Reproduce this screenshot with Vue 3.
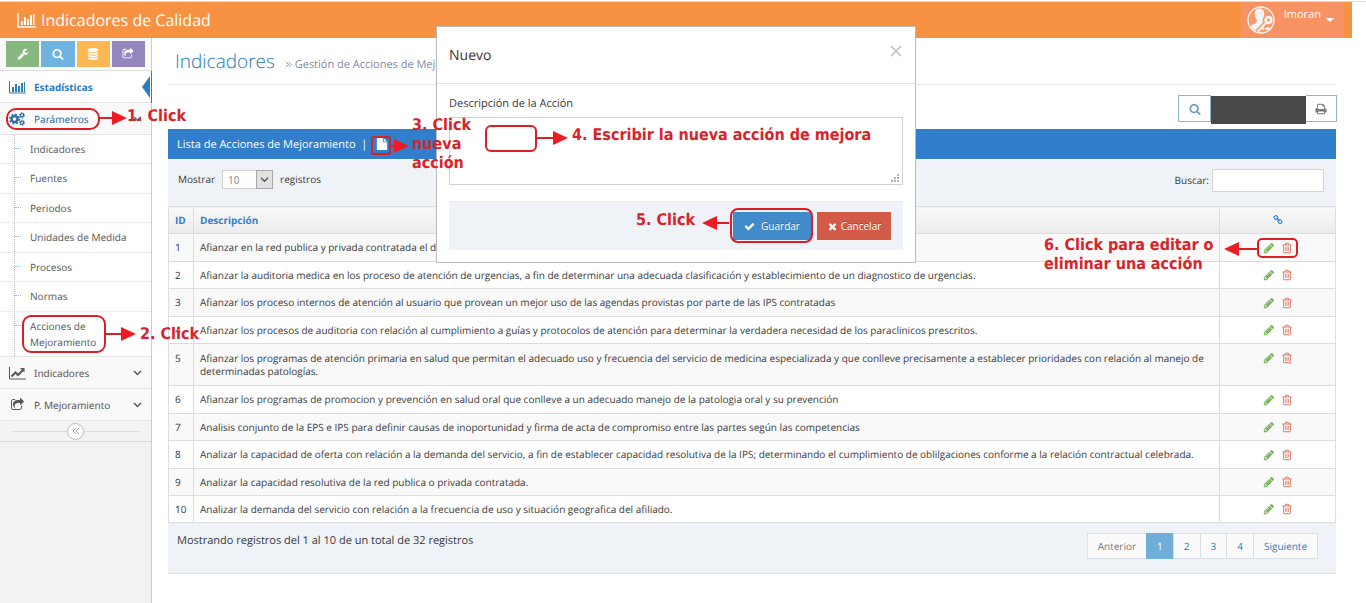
<script setup>
import { ref } from 'vue'

const icons = {
  wrench: 'M448 1472q0-26-19-45t-45-19-45 19-19 45 19 45 45 19 45-19 19-45zm644-420l-682 682q-37 37-90 37-52 0-91-37l-106-108q-38-36-38-90 0-53 38-91l681-681q39 98 114.5 173.5t173.5 114.5zm634-435q0 39-23 106-47 134-164.5 217.5t-258.5 83.5q-185 0-316.5-131.5t-131.5-316.5 131.5-316.5 316.5-131.5q58 0 121.5 16.5t107.5 46.5q16 11 16 28t-16 28l-293 169v224l193 107q5-3 79-48.5t135.5-81 70.5-35.5q15 0 23.5 10t8.5 25z',
  search: 'M1216 832q0-185-131.5-316.5t-316.5-131.5-316.5 131.5-131.5 316.5 131.5 316.5 316.5 131.5 316.5-131.5 131.5-316.5zm512 832q0 52-38 90t-90 38q-54 0-90-38l-343-342q-179 124-399 124-143 0-273.5-55.5t-225-150-150-225-55.5-273.5 55.5-273.5 150-225 225-150 273.5-55.5 273.5 55.5 225 150 150 225 55.5 273.5q0 220-124 399l343 343q37 37 37 90z',
  database: 'M896 768q237 0 443-43t325-127v170q0 69-103 128t-280 93.5-385 34.5-385-34.5-280-93.5-103-128v-170q119 84 325 127t443 43zm0 768q237 0 443-43t325-127v170q0 69-103 128t-280 93.5-385 34.5-385-34.5-280-93.5-103-128v-170q119 84 325 127t443 43zm0-384q237 0 443-43t325-127v170q0 69-103 128t-280 93.5-385 34.5-385-34.5-280-93.5-103-128v-170q119 84 325 127t443 43zm0-1152q208 0 385 34.5t280 93.5 103 128v128q0 69-103 128t-280 93.5-385 34.5-385-34.5-280-93.5-103-128v-128q0-69 103-128t280-93.5 385-34.5z',
  share: 'M1472 989v259q0 119-84.5 203.5t-203.5 84.5h-832q-119 0-203.5-84.5t-84.5-203.5v-832q0-119 84.5-203.5t203.5-84.5h255q13 0 22.5 9.5t9.5 22.5q0 27-26 32-77 26-133 60-10 4-16 4h-112q-66 0-113 47t-47 113v832q0 66 47 113t113 47h832q66 0 113-47t47-113v-214q0-19 18-29 28-13 54-37 16-16 35-8 21 9 21 29zm237-496l-384 384q-18 19-45 19-12 0-25-5-39-17-39-59v-192h-160q-323 0-438 131-119 137-74 473 3 23-20 34-8 2-12 2-16 0-26-13-10-14-21-31t-39.5-68.5-49.5-99.5-38.5-114-17.5-122q0-49 3.5-91t14-90 28-88 47-81.5 68.5-74 94.5-61.5 124.5-48.5 159.5-30.5 196.5-11h160v-192q0-42 39-59 13-5 25-5 26 0 45 19l384 384q19 19 19 45t-19 45z',
  pencil: 'M491 1536l91-91-235-235-91 91v107h128v128h107zm523-928q0-22-22-22-10 0-17 7l-542 542q-7 7-7 17 0 22 22 22 10 0 17-7l542-542q7-7 7-17zm-54-192l416 416-832 832h-416v-416zm683 96q0 53-37 90l-166 166-416-416 166-165q36-38 90-38 53 0 91 38l235 234q37 39 37 91z',
  trash: 'M704 736v576q0 14-9 23t-23 9h-64q-14 0-23-9t-9-23v-576q0-14 9-23t23-9h64q14 0 23 9t9 23zm256 0v576q0 14-9 23t-23 9h-64q-14 0-23-9t-9-23v-576q0-14 9-23t23-9h64q14 0 23 9t9 23zm256 0v576q0 14-9 23t-23 9h-64q-14 0-23-9t-9-23v-576q0-14 9-23t23-9h64q14 0 23 9t9 23zm128 724v-948h-896v948q0 22 7 40.5t14.5 27 10.5 8.5h832q3 0 10.5-8.5t14.5-27 7-40.5zm-672-1076h448l-48-117q-7-9-17-11h-317q-10 2-17 11zm928 32v64q0 14-9 23t-23 9h-96v948q0 83-47 143.5t-113 60.5h-832q-66 0-113-58.5t-47-141.5v-952h-96q-14 0-23-9t-9-23v-64q0-14 9-23t23-9h309l70-167q15-37 54-63t79-26h320q40 0 79 26t54 63l70 167h309q14 0 23 9t9 23z',
  check: 'M1671 566q0 40-28 68l-724 724-136 136q-28 28-68 28t-68-28l-136-136-362-362q-28-28-28-68t28-68l136-136q28-28 68-28t68 28l294 295 656-657q28-28 68-28t68 28l136 136q28 28 28 68z',
  times: 'M1490 1322q0 40-28 68l-136 136q-28 28-68 28t-68-28l-294-294-294 294q-28 28-68 28t-68-28l-136-136q-28-28-28-68t28-68l294-294-294-294q-28-28-28-68t28-68l136-136q28-28 68-28t68 28l294 294 294-294q28-28 68-28t68 28l136 136q28 28 28 68t-28 68l-294 294 294 294q28 28 28 68z',
  file: 'M1152 512v-472q22 14 36 28l408 408q14 14 28 36h-472zm-128 32q0 40 28 68t68 28h544v1056q0 40-28 68t-68 28h-1344q-40 0-68-28t-28-68v-1600q0-40 28-68t68-28h800v544z',
  print: 'M448 1536h896v-256h-896v256zm0-640h896v-384h-160q-40 0-68-28t-28-68v-160h-640v640zm1152 64q0-26-19-45t-45-19-45 19-19 45 19 45 45 19 45-19 19-45zm128 0v416q0 13-9.5 22.5t-22.5 9.5h-224v160q0 40-28 68t-68 28h-960q-40 0-68-28t-28-68v-160h-224q-13 0-22.5-9.5t-9.5-22.5v-416q0-79 56.5-135.5t135.5-56.5h64v-544q0-40 28-68t68-28h672q40 0 88 20t76 48l152 152q28 28 48 76t20 88v256h64q79 0 135.5 56.5t56.5 135.5z',
  link: 'M1520 1216q0-40-28-68l-208-208q-28-28-68-28-42 0-72 32 3 3 19 18.5t21.5 21.5 15 19 13 25.5 3.5 27.5q0 40-28 68t-68 28q-15 0-27.5-3.5t-25.5-13-19-15-21.5-21.5-18.5-19q-33 31-33 73 0 40 28 68l206 207q27 27 68 27 40 0 68-26l147-146q28-28 28-67zm-703-705q0-40-28-68l-206-207q-28-28-68-28-39 0-68 27l-147 146q-28 28-28 67 0 40 28 68l208 208q27 27 68 27 42 0 72-31-3-3-19-18.5t-21.5-21.5-15-19-13-25.5-3.5-27.5q0-40 28-68t68-28q15 0 27.5 3.5t25.5 13 19 15 21.5 21.5 18.5 19q33-31 33-73zm895 705q0 120-85 203l-147 146q-83 83-203 83-121 0-204-85l-206-207q-83-83-83-203 0-123 88-209l-88-88q-86 88-208 88-120 0-204-84l-208-208q-84-84-84-204t85-203l147-146q83-83 203-83 121 0 204 85l206 207q83 83 83 203 0 123-88 209l88 88q86-88 208-88 120 0 204 84l208 208q84 84 84 204z'
}

const shortcuts = [
  { icon: 'wrench', label: 'Configuración', tone: 'green' },
  { icon: 'search', label: 'Consultar', tone: 'blue' },
  { icon: 'database', label: 'Datos', tone: 'amber' },
  { icon: 'share', label: 'Compartir', tone: 'purple' }
]

const submenu = ['Indicadores', 'Fuentes', 'Periodos', 'Unidades de Medida', 'Procesos', 'Normas', 'Acciones de Mejoramiento']

const rows = [
  'Afianzar en la red publica y privada contratada el desarrollo de las acciones',
  'Afianzar la auditoria medica en los proceso de atención de urgencias, a fin de determinar una adecuada clasificación y establecimiento de un diagnostico de urgencias.',
  'Afianzar los proceso internos de atención al usuario que provean un mejor uso de las agendas provistas por parte de las IPS contratadas',
  'Afianzar los procesos de auditoria con relación al cumplimiento a guías y protocolos de atención para determinar la verdadera necesidad de los paraclinicos prescritos.',
  'Afianzar los programas de atención primaria en salud que permitan el adecuado uso y frecuencia del servicio de medicina especializada y que conlleve precisamente a establecer prioridades con relación al manejo de determinadas patologías.',
  'Afianzar los programas de promocion y prevención en salud oral que conlleve a un adecuado manejo de la patologia oral y su prevención',
  'Analisis conjunto de la EPS e IPS para definir causas de inoportunidad y firma de acta de compromiso entre las partes según las competencias',
  'Analizar la capacidad de oferta con relación a la demanda del servicio, a fin de establecer capacidad resolutiva de la IPS; determinando el cumplimiento de oblilgaciones conforme a la relación contractual celebrada.',
  'Analizar la capacidad resolutiva de la red publica o privada contratada.',
  'Analizar la demanda del servicio con relación a la frecuencia de uso y situación geografica del afiliado.'
]

const pages = ['Anterior', '1', '2', '3', '4', 'Siguiente']
const pageSize = ref('10')
const query = ref('')
const description = ref('')
</script>

<template>
  <div class="page">
    <header class="navbar">
      <a href="#" class="brand">
        <svg class="brand-icon" viewBox="0 0 20 16" aria-hidden="true">
          <path d="M1 1v14h18" fill="none" stroke="currentColor" stroke-width="1.4" />
          <path d="M4 9h2v4H4zM7 5h2v8H7zM10 7h2v6h-2zM13 3h2v10h-2zM16 2h1.500v11H16z" fill="currentColor" />
        </svg>
        <span>Indicadores de Calidad</span>
      </a>
      <button class="user" type="button">
        <svg class="avatar" viewBox="0 0 28 28" aria-hidden="true">
          <circle cx="14" cy="14" r="13" fill="#f79a6c" stroke="#fdf3ec" stroke-width="1.300" />
          <path d="M12.500 2.500c3.200 0 5 2.400 4.700 5.700-.2 2.700-1.200 4-1.600 5.200-.2 1.300.3 1.800 1 2.300L7.500 25.200C5.600 24.200 4 22.700 3 21c1.500-2.300 5-3.200 6.300-4.500.8-.8.600-2.200.1-3.200C8.300 11.800 7.700 10 7.700 8c0-3.300 1.800-5.500 4.800-5.500z" fill="#f3f3f3" />
          <circle cx="21.500" cy="14" r="2.900" fill="none" stroke="#f3f3f3" stroke-width="2.600" />
          <path d="M19.500 16.200L11 25.500M14.800 21.300l2.200 2M18.500 23.500c1.800-1.600 3.200-1.400 4.700-.7" fill="none" stroke="#f3f3f3" stroke-width="2.200" />
        </svg>
        <span class="user-name">lmoran</span>
        <svg class="caret" viewBox="0 0 8 4" aria-hidden="true"><path d="M0 0h8L4 4z" fill="currentColor" /></svg>
      </button>
    </header>

    <div class="body">
      <aside class="sidebar">
        <div class="shortcuts">
          <button v-for="s in shortcuts" :key="s.icon" type="button" :class="['shortcut', s.tone]" :aria-label="s.label">
            <svg class="ico" viewBox="0 0 1792 1792" aria-hidden="true"><path :d="icons[s.icon]" /></svg>
          </button>
        </div>
        <nav class="menu">
          <a href="#" class="item active">
            <svg class="menu-icon" viewBox="0 0 17 14" aria-hidden="true">
              <path d="M.5 1v12H17" fill="none" stroke="currentColor" />
              <path d="M3 7h2v5H3zM6 4h2v8H6zM9 6h2v6H9zM12 3h2v9h-2zM15 2h1v10h-1z" fill="currentColor" />
            </svg>
            <span>Estadísticas</span>
            <svg class="pointer" viewBox="0 0 10 32" aria-hidden="true"><path d="M8 5v22L0 16zM9 0h1v32H9z" fill="currentColor" /></svg>
          </a>
          <a href="#" class="item open">
            <svg class="menu-icon" viewBox="0 0 17 14" aria-hidden="true" fill="none" stroke="currentColor">
              <circle cx="5.500" cy="7" r="3" stroke-width="2.400" />
              <circle cx="5.500" cy="7" r="4.700" stroke-width="1.600" stroke-dasharray="1.900 1.790" />
              <circle cx="13" cy="3.200" r="1.600" stroke-width="1.300" />
              <circle cx="13" cy="3.200" r="2.600" stroke-width="1" stroke-dasharray="1.200 1.520" />
              <circle cx="13" cy="10.800" r="1.600" stroke-width="1.300" />
              <circle cx="13" cy="10.800" r="2.600" stroke-width="1" stroke-dasharray="1.200 1.520" />
            </svg>
            <span>Parámetros</span>
            <svg class="chevron" viewBox="0 0 9 6" aria-hidden="true"><path d="M1 1l3.500 3.500L8 1" /></svg>
          </a>
          <ul class="submenu">
            <li v-for="label in submenu" :key="label"><a href="#">{{ label }}</a></li>
          </ul>
          <a href="#" class="item">
            <svg class="menu-icon" viewBox="0 0 17 14" aria-hidden="true" fill="none" stroke="currentColor">
              <path d="M.5 1v12H17" />
              <path d="M2.500 10.500l4-4 2.500 2.500 5-5" stroke-width="2" />
              <path d="M11 2h4.500v4.500z" fill="currentColor" stroke="none" />
            </svg>
            <span>Indicadores</span>
            <svg class="chevron" viewBox="0 0 9 6" aria-hidden="true"><path d="M1 1l3.500 3.500L8 1" /></svg>
          </a>
          <a href="#" class="item">
            <svg class="menu-icon share" viewBox="0 0 1792 1792" aria-hidden="true"><path :d="icons.share" fill="currentColor" /></svg>
            <span>P. Mejoramiento</span>
            <svg class="chevron" viewBox="0 0 9 6" aria-hidden="true"><path d="M1 1l3.500 3.500L8 1" /></svg>
          </a>
        </nav>
        <div class="collapse">
          <button type="button" aria-label="Contraer menú">
            <svg viewBox="0 0 8 8" aria-hidden="true"><path d="M4 1L1 4l3 3M7 1L4 4l3 3" /></svg>
          </button>
        </div>
      </aside>

      <main class="content">
        <div class="page-header">
          <h1>Indicadores</h1>
          <small>
            <svg viewBox="0 0 8 8" aria-hidden="true"><path d="M1 1l3 3-3 3M4 1l3 3-3 3" /></svg>
            Gestión de Acciones de Mejoramiento
          </small>
        </div>

        <div class="tools">
          <button type="button" class="tool find" aria-label="Buscar columnas">
            <svg class="ico" viewBox="0 0 1792 1792" aria-hidden="true"><path :d="icons.search" /></svg>
          </button>
          <span class="masked"></span>
          <button type="button" class="tool print" aria-label="Imprimir">
            <svg class="ico" viewBox="0 0 1792 1792" aria-hidden="true"><path :d="icons.print" /></svg>
          </button>
        </div>

        <section class="panel">
          <div class="panel-title">
            <span>Lista de Acciones de Mejoramiento &nbsp;|</span>
            <button type="button" class="add" aria-label="Nueva acción">
              <svg class="ico" viewBox="0 0 1792 1792" aria-hidden="true"><path :d="icons.file" /></svg>
            </button>
          </div>
          <div class="filters">
            <label class="length">
              <span>Mostrar</span>
              <span class="select">
                <select v-model="pageSize"><option>10</option><option>25</option><option>50</option></select>
                <svg viewBox="0 0 17 18" aria-hidden="true"><path d="M4.500 7l4 4 4-4" /></svg>
              </span>
              <span>registros</span>
            </label>
            <label class="search">Buscar: <input v-model="query" type="text" /></label>
          </div>
          <table>
            <thead>
              <tr>
                <th class="id">ID</th>
                <th>Descripción</th>
                <th class="acts"><svg class="ico" viewBox="0 0 1792 1792" role="img" aria-label="Acciones"><path :d="icons.link" /></svg></th>
              </tr>
            </thead>
            <tbody>
              <tr v-for="(text, i) in rows" :key="i">
                <td>{{ i + 1 }}</td>
                <td>{{ text }}</td>
                <td class="acts">
                  <div class="pair">
                    <button type="button" class="edit" aria-label="Editar"><svg class="ico" viewBox="0 0 1792 1792" aria-hidden="true"><path :d="icons.pencil" /></svg></button>
                    <button type="button" class="remove" aria-label="Eliminar"><svg class="ico" viewBox="0 0 1792 1792" aria-hidden="true"><path :d="icons.trash" /></svg></button>
                  </div>
                </td>
              </tr>
            </tbody>
          </table>
          <div class="panel-foot">
            <span>Mostrando registros del 1 al 10 de un total de 32 registros</span>
            <ul class="pager">
              <li v-for="p in pages" :key="p"><a href="#" :class="{ current: p === '1', off: p === 'Anterior' }">{{ p }}</a></li>
            </ul>
          </div>
        </section>
      </main>
    </div>

    <div class="modal" role="dialog" aria-labelledby="modal-title">
      <div class="modal-head">
        <h2 id="modal-title">Nuevo</h2>
        <button type="button" class="close" aria-label="Cerrar">
          <svg viewBox="0 0 12 12" aria-hidden="true"><path d="M1 1l10 10M11 1L1 11" /></svg>
        </button>
      </div>
      <form class="modal-body" @submit.prevent>
        <label for="accion">Descripción de la Acción</label>
        <div class="area">
          <textarea id="accion" v-model="description"></textarea>
          <svg class="grip" viewBox="0 0 8 8" aria-hidden="true"><path d="M6 0h2v2H6zM3 3h2v2H3zM6 3h2v2H6zM0 6h2v2H0zM3 6h2v2H3zM6 6h2v2H6z" fill="#b0b0b0" /></svg>
        </div>
        <div class="modal-foot">
          <button type="submit" class="btn save"><svg class="ico" viewBox="0 0 1792 1792" aria-hidden="true"><path :d="icons.check" /></svg>Guardar</button>
          <button type="button" class="btn cancel"><svg class="ico" viewBox="0 0 1792 1792" aria-hidden="true"><path :d="icons.times" /></svg>Cancelar</button>
        </div>
      </form>
    </div>

    <div class="guide">
      <svg class="marks" width="1366" height="603" viewBox="0 0 1366 603" aria-hidden="true">
        <g fill="none" stroke="#dc1f26" stroke-width="2">
          <rect x="7" y="109" width="92" height="20" rx="9" />
          <path d="M99 118h14" />
          <rect x="23" y="316" width="82" height="36" rx="8" />
          <path d="M105 334h17" />
          <rect x="372" y="137" width="18" height="17" rx="2" />
          <path d="M390 146h6" />
          <rect x="486" y="126" width="50" height="25" rx="5" />
          <path d="M536 138h18" />
          <rect x="731" y="209" width="81" height="33" rx="7" />
          <path d="M729 223h-13" />
          <rect x="1258" y="239" width="39" height="18" rx="4" />
          <path d="M1257 249h-19" />
        </g>
        <path fill="#ed1c24" d="M112 111l15 7-15 7zM121 327l15 7-15 7zM394 139l15 7-15 7zM553 131l15 7-15 7zM717 216l-15 7 15 7zM1239 242l-15 7 15 7z" />
      </svg>
      <span class="note n1">1. Click</span>
      <span class="note n2">2. Click</span>
      <span class="note n3">3. Click<br />nueva<br />acción</span>
      <span class="note n4">4. Escribir la nueva acción de mejora</span>
      <span class="note n5">5. Click</span>
      <span class="note n6">6. Click para editar o<br />eliminar una acción</span>
    </div>
  </div>
</template>

<style>
body {
  background: #fff;
}
</style>

<style scoped>
.page,
.page * {
  box-sizing: border-box;
}
.page {
  position: relative;
  display: flex;
  flex-direction: column;
  min-height: 100vh;
  padding-right: 14px;
  overflow: hidden;
  font-family: "Open Sans", "Noto Sans", sans-serif;
  font-size: 11px;
  text-rendering: geometricPrecision;
  color: #393939;
}
.page::before {
  content: "";
  height: 1px;
  margin: 1px -14px 0 0;
  background: #dcdcdc;
}
button,
input,
select,
textarea {
  font: inherit;
  color: inherit;
  margin: 0;
  padding: 0;
  border: 0;
  border-radius: 0;
  background: none;
}
a {
  color: inherit;
  text-decoration: none;
}
ul {
  list-style: none;
  margin: 0;
  padding: 0;
}
.ico {
  display: block;
  width: 12px;
  height: 12px;
  fill: currentColor;
}

.navbar {
  display: flex;
  justify-content: space-between;
  height: 36px;
  padding: 0 8px 0 17px;
  background: #f79242;
  color: #fff;
}
.brand {
  display: flex;
  align-items: center;
  gap: 4px;
  font-size: 16px;
}
.brand-icon {
  width: 20px;
  height: 16px;
}
.user {
  display: flex;
  align-items: center;
  width: 103px;
  padding: 0 10px 0 6px;
  background: #f79263;
}
.avatar {
  width: 28px;
  height: 28px;
}
.user-name {
  align-self: flex-start;
  margin: 4px auto 0 9px;
  line-height: 16px;
}
.caret {
  width: 8px;
  height: 4px;
}

.body {
  display: flex;
  flex: 1;
}
.sidebar {
  flex: 0 0 152px;
  border-right: 1px solid #ccc;
  background: #f2f2f2;
}
.shortcuts {
  display: flex;
  gap: 2px;
  height: 33px;
  padding: 3px 6px;
  border-bottom: 1px solid #ddd;
  background: #fafafa;
}
.shortcut {
  flex: 1;
  display: flex;
  align-items: center;
  justify-content: center;
  height: 26px;
  color: #fff;
}
.green { background: #87b87f; }
.blue { background: #6fb3e0; }
.amber { background: #ffb752; }
.purple { background: #9585bf; }

.menu {
  font-family: "Noto Sans", "Open Sans", sans-serif;
  font-size: 10px;
}
.item {
  position: relative;
  display: flex;
  align-items: center;
  height: 32px;
  padding: 0 9px;
  border-bottom: 1px solid #e5e5e5;
  background: #f9f9f9;
  color: #585858;
}
.menu-icon {
  width: 17px;
  height: 14px;
  margin-right: 8px;
}
.item.active {
  background: #fff;
  color: #2b7dbc;
  font-weight: 700;
}
.item.open {
  color: #2b6da8;
}
.pointer {
  position: absolute;
  right: -1px;
  top: 0;
  width: 10px;
  height: 32px;
}
.chevron {
  width: 9px;
  height: 6px;
  margin-left: auto;
  fill: none;
  stroke: currentColor;
  stroke-width: 1.5;
}
.submenu {
  position: relative;
  border-bottom: 1px solid #e5e5e5;
  background: #fff;
  color: #616161;
}
.submenu::before {
  content: "";
  position: absolute;
  left: 14px;
  top: 0;
  bottom: 0;
  border-left: 1px dotted #9dbdd6;
}
.submenu li {
  position: relative;
  border-top: 1px dotted #ddd;
}
.submenu li:first-child {
  border-top: 0;
}
.submenu li::before {
  content: "";
  position: absolute;
  left: 15px;
  top: 13px;
  width: 6px;
  border-top: 1px dotted #9dbdd6;
}
.submenu a {
  display: block;
  padding: 6px 40px 6px 30px;
  line-height: 16px;
}
.submenu li:nth-child(even) a {
  padding-bottom: 7px;
}
.submenu li:nth-child(4) a {
  padding-right: 8px;
}
.collapse {
  display: flex;
  align-items: center;
  gap: 0;
  height: 21px;
  padding: 0 12px;
  border-bottom: 1px solid #ddd;
  background: #f3f3f3;
}
.collapse::before,
.collapse::after {
  content: "";
  flex: 1;
  height: 1px;
  background: #ddd;
}
.collapse button {
  display: flex;
  align-items: center;
  justify-content: center;
  width: 17px;
  height: 17px;
  border: 1px solid #bbb;
  border-radius: 50%;
  background: #fff;
}
.collapse svg {
  width: 8px;
  height: 8px;
  fill: none;
  stroke: #aaa;
}

.content {
  flex: 1;
  min-width: 0;
  padding: 0 16px;
}
.page-header {
  display: flex;
  align-items: baseline;
  gap: 10px;
  height: 47px;
  padding: 9px 7px 0;
  border-bottom: 1px dotted #ddd;
}
h1 {
  margin: 0;
  font-size: 19px;
  font-weight: 300;
  line-height: 28px;
  color: #2679b5;
}
small {
  font-size: 11px;
  color: #8089a0;
}
small svg {
  width: 7px;
  height: 7px;
  fill: none;
  stroke: currentColor;
}
.tools {
  display: flex;
  justify-content: flex-end;
  height: 34px;
  margin: 10px -1px 0 0;
}
.tool {
  display: flex;
  align-items: center;
  justify-content: center;
  width: 33px;
  height: 27px;
  border: 1px solid #8fb5cf;
  color: #6b9dc2;
}
.tool.print {
  width: 31px;
  border-left: 0;
  color: #777;
}
.masked {
  width: 95px;
  height: 28px;
  margin-top: 1px;
  background: #484848;
}

.panel-title {
  display: flex;
  align-items: center;
  gap: 9px;
  height: 30px;
  padding-left: 9px;
  background: #307ecc;
  color: #fff;
}
.filters {
  display: flex;
  justify-content: space-between;
  height: 46px;
  margin-top: 1px;
  padding: 9px 12px 0 10px;
  background: #eff3f8;
}
.length,
.search {
  display: flex;
  align-items: center;
  height: 22px;
}
.length {
  gap: 7px;
  height: 20px;
  font-size: 10px;
}
.select {
  position: relative;
  display: flex;
  width: 51px;
  height: 19px;
}
.select select {
  width: 100%;
  padding: 2px 5px 0;
  border: 1px solid #d0d0d0;
  background: #fff;
  color: #858585;
  appearance: none;
}
.select svg {
  position: absolute;
  right: 0;
  top: 0;
  width: 17px;
  height: 19px;
  border: 1px solid #a8a8a8;
  background: #e1e1e1;
  fill: none;
  stroke: #555;
  stroke-width: 1.5;
  pointer-events: none;
}
.search {
  gap: 3px;
  font-size: 10px;
}
.search input {
  width: 112px;
  height: 23px;
  padding: 0 4px;
  border: 1px solid #d5d5d5;
  background: #fff;
}

table {
  width: 100%;
  border-collapse: collapse;
  table-layout: fixed;
  background: #fff;
  font-size: 10px;
}
th,
td {
  height: 27px;
  padding: 0 6px;
  border: 1px solid #ddd;
  line-height: 13px;
  text-align: left;
}
th {
  background: linear-gradient(#f8f8f8, #ececec);
  color: #307ecc;
  font-weight: 700;
}
th.id {
  width: 25px;
}
th.acts {
  width: 116px;
}
th .ico {
  width: 10px;
  height: 10px;
  margin: 0 auto;
}
tbody tr:nth-child(odd) {
  background: #f9f9f9;
}
tbody tr:nth-child(1) td,
tbody tr:nth-child(3) td,
tbody tr:nth-child(6) td,
tbody tr:nth-child(8) td {
  height: 28px;
}
tbody tr:nth-child(5) td {
  height: 42px;
  padding-top: 8px;
  vertical-align: top;
}
.pair {
  display: flex;
  justify-content: center;
  gap: 6px;
}
.edit {
  color: #7cb35e;
}
.remove {
  color: #e07764;
}
.panel-foot {
  display: flex;
  justify-content: space-between;
  height: 51px;
  padding: 10px 18px 0 9px;
  border-bottom: 1px solid #e0e0e0;
  background: #eff3f8;
  font-size: 11px;
  line-height: 16px;
}
.pager {
  display: flex;
  font-size: 10px;
}
.pager a {
  display: block;
  height: 26px;
  padding: 0 10px;
  border: 1px solid #d9e0e6;
  margin-left: -1px;
  background: #fafafa;
  color: #2283c5;
  line-height: 25px;
}
.pager .off {
  color: #777;
}
.pager .current {
  border-color: #6faed9;
  background: #6faed9;
  color: #fff;
}

.modal {
  position: absolute;
  top: 26px;
  left: 0;
  right: 14px;
  width: 480px;
  margin: 0 auto;
  border: 1px solid #bbb;
  background: #fff;
}
.modal-head {
  display: flex;
  align-items: center;
  justify-content: space-between;
  height: 57px;
  padding: 0 12px;
  border-bottom: 1px solid #e5e5e5;
}
h2 {
  margin: 0;
  font-size: 14px;
  font-weight: 400;
}
.close {
  padding: 0 1px 8px;
}
.close svg {
  display: block;
  width: 12px;
  height: 12px;
  fill: none;
  stroke: #ccc;
  stroke-width: 2;
}
.modal-body {
  padding: 12px;
}
.modal-body label {
  display: block;
  margin-bottom: 5px;
  line-height: 16px;
}
.area {
  position: relative;
}
.area textarea {
  display: block;
  width: 100%;
  height: 68px;
  padding: 4px;
  border: 1px solid #d0d0d0;
  resize: none;
}
.grip {
  position: absolute;
  right: 4px;
  bottom: 3px;
  width: 8px;
  height: 8px;
}
.modal-foot {
  display: flex;
  justify-content: flex-end;
  gap: 6px;
  margin-top: 16px;
  padding: 10px 12px;
  border-top: 1px solid #e4e9ee;
  background: #eff3f8;
}
.btn {
  display: flex;
  align-items: center;
  justify-content: center;
  height: 28px;
  font-size: 10px;
  color: #fff;
  text-shadow: 0 -1px 0 rgba(0, 0, 0, 0.25);
}
.save {
  width: 78px;
  gap: 6px;
  background: #428bca;
}
.cancel {
  width: 74px;
  gap: 3px;
  background: #d15b47;
}
.btn .ico {
  width: 11px;
  height: 11px;
}

.guide {
  position: absolute;
  left: 0;
  top: 0;
  pointer-events: none;
}
.marks {
  display: block;
}
.note {
  position: absolute;
  font-family: "DejaVu Sans Condensed", "DejaVu Sans", sans-serif;
  font-size: 16px;
  font-weight: 700;
  line-height: 19px;
  white-space: nowrap;
  color: #d8232a;
}
.n1 { left: 127px; top: 106px; }
.n2 { left: 140px; top: 324px; }
.n3 { left: 412px; top: 115px; }
.n4 { left: 572px; top: 125px; }
.n5 { left: 636px; top: 210px; }
.n6 { left: 1044px; top: 235px; }
</style>
